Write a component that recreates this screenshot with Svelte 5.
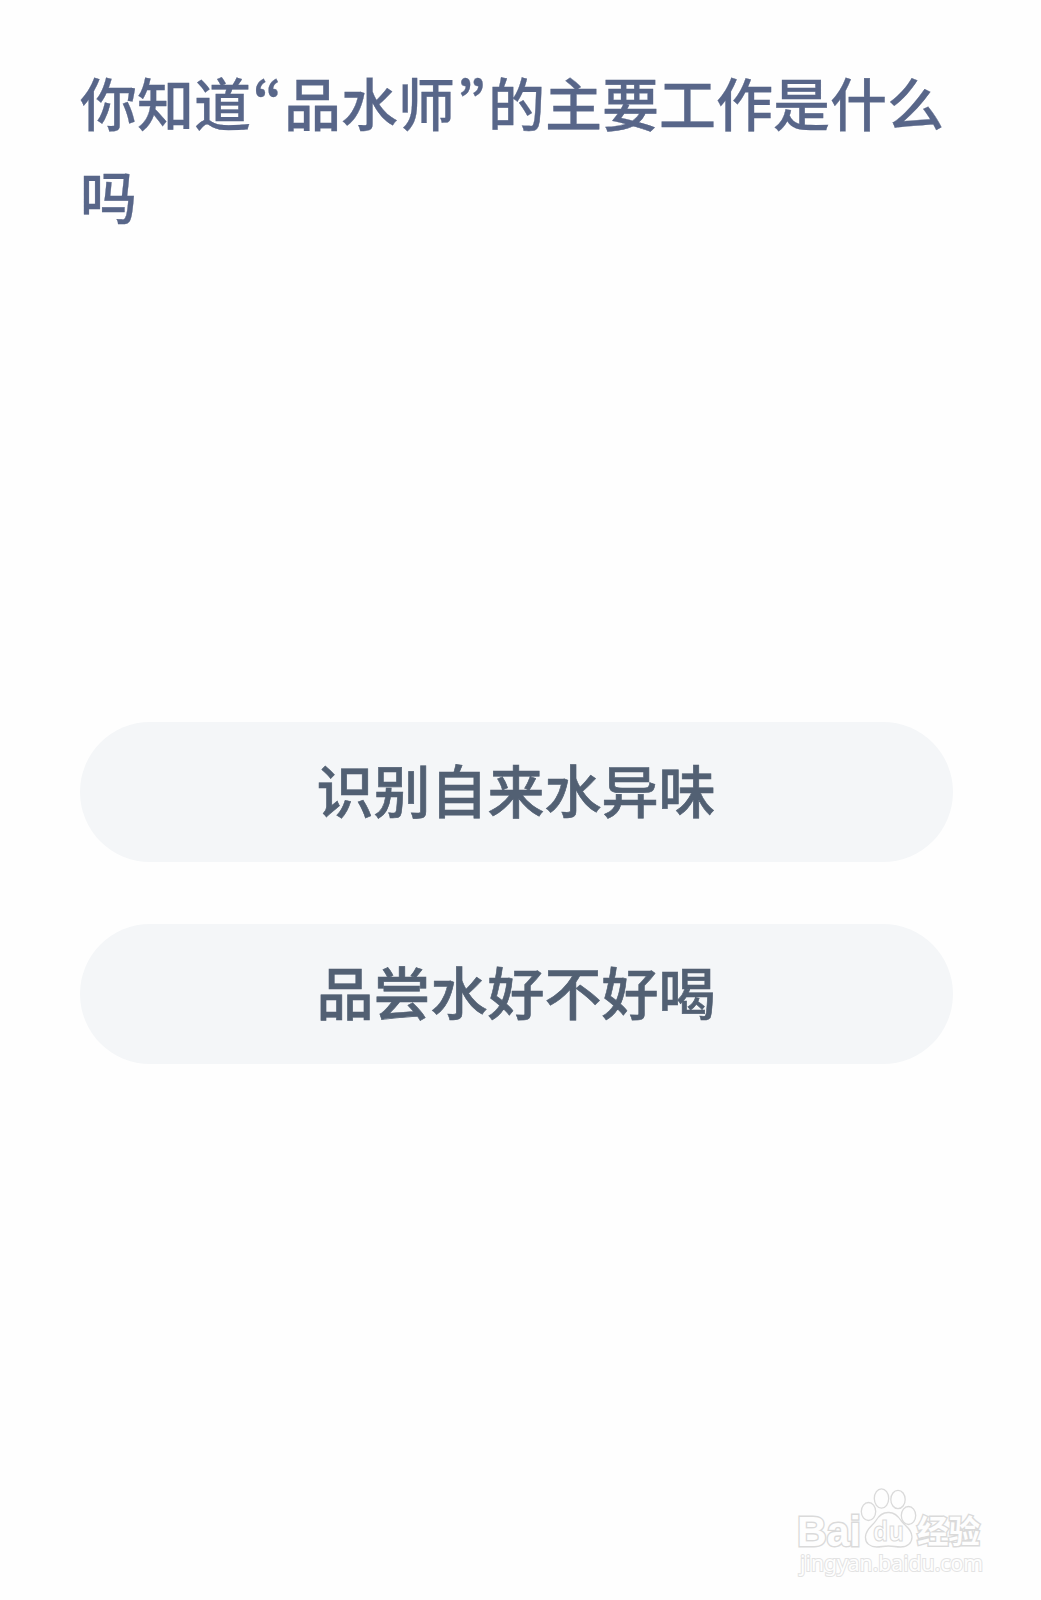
<script>
  const options = ['识别自来水异味', '品尝水好不好喝'];
</script>

<main>
  <h1>你知道<span class="quote">“</span>品水师<span class="quote">”</span>的主要工作是什么<br />吗</h1>
  <div class="options">
    {#each options as option}
      <button type="button">{option}</button>
    {/each}
  </div>
  <footer>
    <svg width="200" height="104" viewBox="0 0 200 104" aria-label="Baidu 经验">
      <g class="outline">
        <text class="brand" x="7" y="60.500" textLength="64" lengthAdjust="spacingAndGlyphs">Bai</text>
        <ellipse cx="78.5" cy="26.5" rx="7.2" ry="9" />
        <ellipse cx="91.5" cy="13.5" rx="7.2" ry="9.6" />
        <ellipse cx="108" cy="14.5" rx="7.2" ry="9.2" />
        <ellipse cx="118.5" cy="30.5" rx="7.2" ry="9" />
        <path d="M98 27.5c-6 0-9 3-12 8s-10 8-10.500 16c-.5 7 5 10.500 11 10.500 5 0 7-1 12-1s7 1 12 1c7 0 11.500-4 11.500-10 0-8-7-11-11-16.500-3-4.500-6-8-12-8z" />
        <text class="du" x="83" y="56" textLength="31" lengthAdjust="spacingAndGlyphs">du</text>
        <text class="cn" x="127" y="58" textLength="63" lengthAdjust="spacingAndGlyphs">经验</text>
        <text class="url" x="10" y="86" textLength="183" lengthAdjust="spacingAndGlyphs">jingyan.baidu.com</text>
      </g>
    </svg>
  </footer>
</main>

<style>
  :global(body) {
    margin: 0;
    background: #fefefe;
  }
  main {
    box-sizing: border-box;
    height: 1600px;
    padding: 55px 88px 0 80px;
    display: flex;
    flex-direction: column;
    font-family: 'Noto Sans CJK SC', sans-serif;
  }
  h1 {
    margin: 0;
    height: 667px;
    flex: none;
    color: #586689;
    font-size: 57px;
    font-weight: 500;
    line-height: 92.500px;
    white-space: nowrap;
    -webkit-text-stroke: 0.3px #586689;
  }
  .quote {
    display: inline-block;
    width: 33px;
    text-align: center;
    font-size: 50px;
    font-weight: 700;
    line-height: 1;
    vertical-align: 4px;
    font-feature-settings: 'pwid';
  }
  .options {
    display: flex;
    flex-direction: column;
    gap: 62px;
  }
  button {
    height: 140px;
    border: 0;
    padding: 0 1px 7px 0;
    border-radius: 70px;
    background: #f4f6f8;
    color: #526073;
    font: 500 57px/133px 'Noto Sans CJK SC', sans-serif;
    -webkit-text-stroke: 0.6px #526073;
  }
  footer {
    margin: 421px -60px 0 0;
    display: flex;
    justify-content: flex-end;
    padding-right: 23px;
  }
  .outline {
    fill: #fefefe;
    stroke: #d9d9d9;
    stroke-width: 1.3;
    opacity: 0.95;
  }
  .brand {
    font: 700 42px 'Liberation Sans', sans-serif;
    paint-order: stroke;
    stroke-width: 2.8;
  }
  .du {
    font: 700 26px 'Open Sans', sans-serif;
    stroke-width: 1;
  }
  .cn {
    font: 700 32px 'Noto Sans CJK SC', sans-serif;
    paint-order: stroke;
    stroke-width: 2.8;
  }
  .url {
    font: 400 22px 'Noto Sans', sans-serif;
    paint-order: stroke;
    stroke-width: 2;
    stroke: #e2e2e2;
  }
</style>
